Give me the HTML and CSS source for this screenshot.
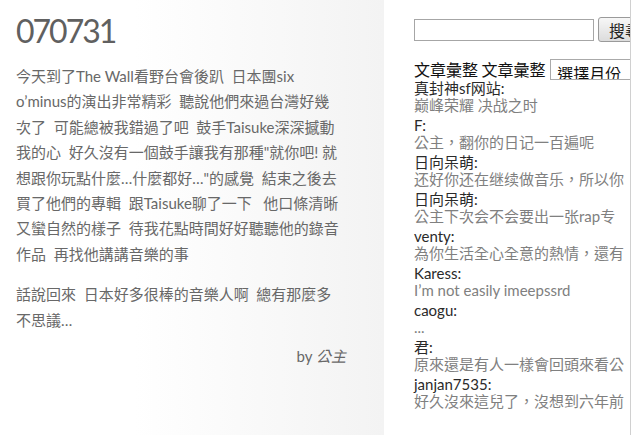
FILE: index.html
```html
<!DOCTYPE html>
<html lang="zh-Hant">
<head>
<meta charset="UTF-8">
<title>070731</title>
<link rel="stylesheet" href="styles.css">
</head>
<body>

<div class="page">
  <div class="main">
    <h1 class="post-title">070731</h1>
    <div class="post-body">
      <p>今天到了The Wall看野台會後趴&nbsp; 日本團six<br>
      o’minus的演出非常精彩&nbsp; 聽說他們來過台灣好幾<br>
      次了&nbsp; 可能總被我錯過了吧&nbsp; 鼓手Taisuke深深撼動<br>
      我的心&nbsp; 好久沒有一個鼓手讓我有那種"就你吧! 就<br>
      想跟你玩點什麼…什麼都好…"的感覺&nbsp; 結束之後去<br>
      買了他們的專輯&nbsp; 跟Taisuke聊了一下&nbsp;&nbsp; 他口條清晰<br>
      又蠻自然的樣子&nbsp; 待我花點時間好好聽聽他的錄音<br>
      作品&nbsp; 再找他講講音樂的事</p>
      <p>話說回來&nbsp; 日本好多很棒的音樂人啊&nbsp; 總有那麼多<br>
      不思議…</p>
    </div>
    <div class="post-author">by <em>公主</em></div>
  </div>

  <div class="sidebar">
    <form class="search-form">
      <input type="text" class="search-input">
      <button type="button" class="search-btn">搜尋</button>
    </form>

    <div class="archive">
      文章彙整 文章彙整
      <select class="archive-select">
        <option>選擇月份</option>
      </select>
    </div>

    <ul class="comments">
      <li><span class="who">真封神sf网站:</span><span class="what">巅峰荣耀 决战之时</span></li>
      <li><span class="who">F:</span><span class="what">公主，翻你的日记一百遍呢</span></li>
      <li><span class="who">日向呆萌:</span><span class="what">还好你还在继续做音乐，所以你</span></li>
      <li><span class="who">日向呆萌:</span><span class="what">公主下次会不会要出一张rap专</span></li>
      <li><span class="who">venty:</span><span class="what">為你生活全心全意的熱情，還有</span></li>
      <li><span class="who">Karess:</span><span class="what">I’m not easily imeepssrd</span></li>
      <li><span class="who">caogu:</span><span class="what">...</span></li>
      <li><span class="who">君:</span><span class="what">原來還是有人一樣會回頭來看公</span></li>
      <li><span class="who">janjan7535:</span><span class="what">好久沒來這兒了，沒想到六年前</span></li>
    </ul>
  </div>
</div>

</body>
</html>
```

FILE: styles.css
```css
body {
    margin: 0;
    padding: 0;
    background-color: #fff;
    font-family: Lato, "Noto Sans CJK TC", sans-serif;
    overflow: hidden;
}

.page {
    display: flex;
    min-height: 100vh;
}

/* 文章區 */
.main {
    width: 384px;
    flex-shrink: 0;
    box-sizing: border-box;
    padding: 12px 20px 0 16px;
    background: linear-gradient(to right, #fff 35%, #f3f3f3);
    color: #686868;
}

.post-title {
    margin: 0;
    font-size: 32px;
    font-weight: normal;
    line-height: 38px;
    letter-spacing: -2px;
    color: #606060;
}

.post-body {
    margin-top: 14px;
    font-size: 15px;
    line-height: 25.4px;
    white-space: nowrap;
}

.post-body p {
    margin: 0 0 15px;
}

.post-author {
    width: 330px;
    text-align: right;
    font-size: 15px;
    line-height: 25.4px;
    margin-top: -4px;
}

.post-author em {
    font-style: italic;
}

/* 側欄 */
.sidebar {
    width: 247px;
    flex-shrink: 0;
    box-sizing: border-box;
    padding: 17px 0 0 30px;
    border-right: 1px solid #d0d0d0;
    overflow: hidden;
    white-space: nowrap;
}

.search-form {
    display: flex;
    align-items: center;
    margin: 0;
}

.search-input {
    flex-shrink: 0;
    width: 180px;
    height: 22px;
    box-sizing: border-box;
    border: 1px solid #a6a6a6;
    margin: 0;
}

.search-btn {
    flex-shrink: 0;
    margin-left: 4px;
    height: 25px;
    padding: 0 10px;
    font-family: "Noto Sans CJK TC", sans-serif;
    font-size: 16px;
    line-height: 22px;
    color: #222;
    background: linear-gradient(#f7f7f7, #dcdcdc);
    border: 1px solid #9a9a9a;
    border-radius: 3px;
}

.archive {
    margin-top: 17px;
    height: 21px;
    font-family: "Noto Sans CJK TC", sans-serif;
    font-size: 16px;
    line-height: 20px;
    color: #111;
}

.archive-select {
    width: 150px;
    height: 21px;
    margin: 0 0 0 1px;
    padding: 0 0 0 2px;
    font-family: "Noto Sans CJK TC", sans-serif;
    font-size: 16px;
    border: 1px solid #aaa;
    background-color: #fff;
    color: #111;
    vertical-align: top;
}

.comments {
    list-style: none;
    margin: 0;
    padding: 0;
    font-size: 15px;
    line-height: 17px;
}

.comments li {
    margin-bottom: 3px;
}

.comments .who {
    display: block;
    color: #2a2a2a;
}

.comments .what {
    display: block;
    color: #808080;
}
```
